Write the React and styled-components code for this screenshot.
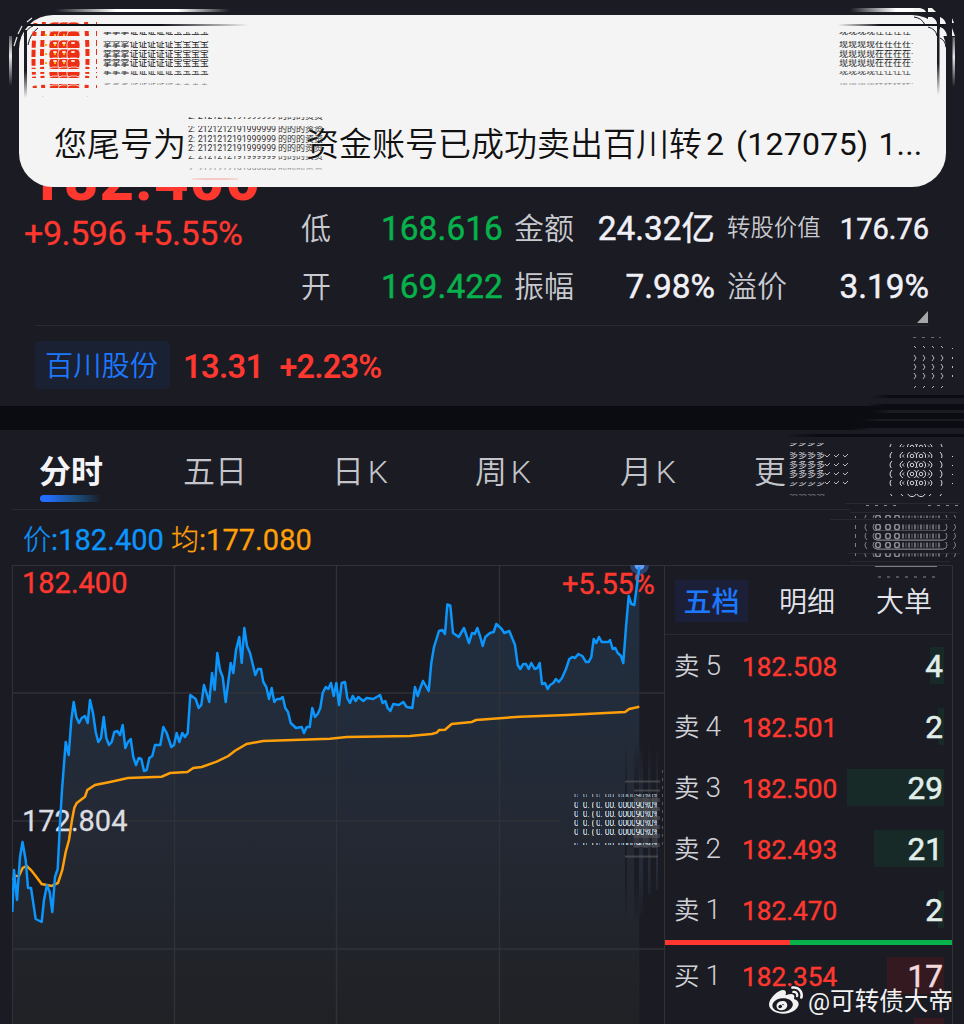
import React from "react";
import styled, { createGlobalStyle, css } from "styled-components";
import { FaWeibo } from "react-icons/fa";

const Global = createGlobalStyle`
  * { box-sizing: border-box; }
  body {
    margin: 0;
    background: #1a1b23;
    font-family: Roboto, "Noto Sans CJK SC", sans-serif;
    line-height: 1;
  }
`;

const red = "#ff382f";
const green = "#07b14b";
const line = "#2a2b30";

const Screen = styled.main`
  position: relative;
  width: 964px;
  height: 1024px;
  overflow: hidden;
  background: #1a1b23;
  color: #ececf2;
`;

/* ---------- quote header ---------- */
const Quote = styled.section`
  height: 406px;
  padding: 158px 35px 0 24px;
`;
const QuoteTop = styled.div`
  display: flex;
  height: 167px;
`;
const PriceColumn = styled.div`
  width: 277px;
`;
const LastPrice = styled.div`
  height: 44px;
  line-height: 44px;
  padding-left: 4px;
  font-size: 60px;
  font-weight: 800;
  letter-spacing: 1.1px;
  color: ${red};
`;
const Change = styled.div`
  margin-top: 13px;
  line-height: 36px;
  font-size: 34px;
  letter-spacing: -0.4px;
  white-space: nowrap;
  -webkit-text-stroke: 0.3px ${red};
  color: ${red};
`;
const Stats = styled.div`
  display: grid;
  grid-template-columns: 75px 127px 11px 70px 131px 12px 100px 102px;
  grid-template-rows: 58px 58px;
  align-items: center;
  padding-top: 42px;
`;
const StatLabel = styled.span`
  grid-column: ${(p) => p.$col};
  margin-top: -1px;
  font-size: ${(p) => (p.$small ? 23.4 : 30)}px;
  font-weight: 350;
  color: #c9cacf;
  white-space: nowrap;
`;
const StatValue = styled.span`
  grid-column: ${(p) => p.$col};
  justify-self: end;
  font-size: ${(p) => (p.$small ? 29 : 33.4)}px;
  font-weight: 400;
  letter-spacing: ${(p) => (p.$green ? 0.1 : 0)}px;
  -webkit-text-stroke: 0.5px currentColor;
  color: ${(p) => (p.$green ? green : "#f0f0f6")};
  white-space: nowrap;
`;
const QuoteRule = styled.div`
  display: flex;
  justify-content: flex-end;
  align-items: flex-end;
  height: 1px;
  margin-left: 11px;
  background: ${line};
`;
const Expand = styled.svg`
  width: 11px;
  height: 12px;
  margin-bottom: 3px;
  margin-right: 1px;
`;
const StockRow = styled.div`
  display: flex;
  align-items: center;
  height: 48px;
  margin: 15px 0 0 11px;
`;
const StockTag = styled.span`
  width: 135px;
  height: 48px;
  line-height: 52px;
  border-radius: 4px;
  background: #1a2132;
  color: #1c78ff;
  text-align: center;
  font-size: 28.2px;
  font-weight: 350;
  text-indent: -2px;
`;
const StockFigure = styled.span`
  margin-left: ${(p) => p.$gap}px;
  padding-top: 5px;
  font-size: 32.5px;
  font-weight: 600;
  letter-spacing: ${(p) => p.$ls}px;
  color: ${red};
`;

const Divider = styled.div`
  height: 24px;
  background: #0b0c11;
`;

/* ---------- period tabs ---------- */
const Tabs = styled.nav`
  display: flex;
  height: 80px;
  padding: 0 0 0 39px;
  margin-bottom: -1px;
`;
const Tab = styled.span`
  position: relative;
  width: ${(p) => p.$w}px;
  line-height: 84px;
  font-size: 32px;
  font-weight: ${(p) => (p.$on ? 600 : 350)};
  color: ${(p) => (p.$on ? "#f4f4f8" : "#c4c5ca")};
  word-spacing: -4px;
  white-space: nowrap;
  ${(p) =>
    p.$on &&
    css`
      &::after {
        content: "";
        position: absolute;
        left: 1px;
        top: 65px;
        width: 62px;
        height: 7px;
        border-radius: 4px;
        background: linear-gradient(90deg, #226dff 12%, #1b5287 55%, #1a1b23);
      }
    `}
`;
const TabRule = styled.div`
  width: 838px;
  height: 1px;
  margin-left: 12px;
  background: ${line};
`;
const Readout = styled.div`
  display: flex;
  gap: 7px;
  height: 55px;
  padding-left: 23px;
  line-height: 60px;
  font-size: 29px;
`;
const Reading = styled.span`
  color: ${(p) => p.$c};
  letter-spacing: 0.05px;
  -webkit-text-stroke: 0.3px currentColor;
  span {
    font-size: 28px;
    font-weight: 300;
  }
`;

/* ---------- chart + order book ---------- */
const Body = styled.div`
  display: flex;
  height: 459px;
  padding-left: 12px;
`;
const Chart = styled.div`
  position: relative;
  width: 652px;
`;
const Plot = styled.svg`
  display: block;
  width: 652px;
  height: 459px;
`;
const AxisLabel = styled.span`
  position: absolute;
  left: ${(p) => p.$x}px;
  top: ${(p) => p.$y}px;
  font-size: 29px;
  -webkit-text-stroke: 0.4px currentColor;
  color: ${(p) => p.$c};
`;
const Book = styled.aside`
  width: 289px;
  height: 480px;
  border: 1px solid #303136;
`;
const BookTabs = styled.div`
  display: flex;
  align-items: center;
  height: 69px;
  padding: 2px 0 0 10px;
  border-bottom: 1px solid ${line};
`;
const BookTab = styled.span`
  width: ${(p) => p.$w}px;
  height: 42px;
  line-height: 45px;
  margin-right: ${(p) => p.$gap || 0}px;
  text-align: center;
  font-size: 28px;
  font-weight: ${(p) => (p.$on ? 500 : 350)};
  color: ${(p) => (p.$on ? "#1c78ff" : "#e4e4ea")};
  background: ${(p) => (p.$on ? "#1b1f38" : "transparent")};
`;
const Level = styled.div`
  display: flex;
  align-items: center;
  height: 61px;
  padding: 0 8px 0 9px;
`;
const Side = styled.span`
  width: 68px;
  padding-top: 1px;
  font-size: 28px;
  font-weight: 350;
  color: #d0d1d6;
  white-space: nowrap;
  span {
    font-size: 25.5px;
    margin-right: 6px;
  }
`;
const LevelPrice = styled.span`
  width: 104px;
  padding-top: 3px;
  font-size: 26.2px;
  -webkit-text-stroke: 0.4px currentColor;
  color: ${red};
`;
const Volume = styled.span`
  display: flex;
  justify-content: flex-end;
  align-items: center;
  flex: 1;
  height: 37px;
  padding: 2px 1px 0 0;
  font-size: 31.5px;
  font-weight: 400;
  -webkit-text-stroke: 0.6px currentColor;
  color: ${(p) => (p.$buy ? "#f3d9dc" : "#e0eee9")};
  background: linear-gradient(${(p) => (p.$buy ? "#341a20, #341a20" : "#182a27, #182a27")}) right / ${(p) => p.$fill}px 100% no-repeat;
`;
const Ratio = styled.div`
  display: flex;
  height: 5px;
  background: ${green};
  &::before {
    content: "";
    width: 125px;
    background: ${red};
  }
`;

/* ---------- notification ---------- */
const Notice = styled.div`
  position: absolute;
  left: 19px;
  top: 15px;
  width: 927px;
  height: 172px;
  border-radius: 34px;
  background: #f4f4f4;
  color: #111;
`;
const Message = styled.p`
  display: flex;
  align-items: center;
  margin: 108px 0 0 35px;
  height: 42px;
  font-size: 33px;
  font-weight: 350;
  white-space: nowrap;
`;
const Masked = styled.span`
  width: 120px;
`;
const Latin = styled.span`
  margin-left: ${(p) => p.$gap}px;
  font-size: 32px;
  letter-spacing: ${(p) => p.$ls || 0}px;
  font-weight: 400;
`;

/* ---------- repeated-tile blocks ---------- */
const TileBlock = styled.div`
  position: absolute;
  left: ${(p) => p.$x}px;
  top: ${(p) => p.$y}px;
  color: ${(p) => p.$c};
`;
const TileRow = styled.div`
  display: flex;
  height: ${(p) => p.$h}px;
  margin-bottom: ${(p) => p.$gap}px;
  align-items: ${(p) => p.$align || "center"};
  overflow: hidden;
  opacity: ${(p) => p.$fade || 1};
`;
const Tile = styled.span`
  flex: none;
  width: ${(p) => p.$w}px;
  height: ${(p) => p.$s}px;
  line-height: ${(p) => p.$s}px;
  font-size: ${(p) => p.$s}px;
  font-weight: 400;
  overflow: hidden;
`;
const Overlay = styled.svg`
  position: absolute;
  left: 0;
  top: 0;
  pointer-events: none;
`;

const Tiles = ({ x, y, c, rows, text, w = 9, s = 9 }) => (
  <TileBlock $x={x} $y={y} $c={c} aria-hidden="true">
    {rows.map(([h, gap, align, fade], i) => (
      <TileRow key={i} $h={h} $gap={gap} $align={align} $fade={fade}>
        {[...text].map((ch, j) => (
          <Tile key={j} $w={w} $s={s}>
            {ch}
          </Tile>
        ))}
      </TileRow>
    ))}
  </TileBlock>
);

const Watermark = styled.div`
  position: absolute;
  left: 769px;
  top: 985px;
  display: flex;
  align-items: center;
  height: 32px;
  gap: 5px;
  color: #f2f2f2;
  font-size: 24.6px;
  white-space: nowrap;
  span {
    padding-top: 3px;
  }
`;

const price =
  "12.3,912 14,870 17,900 20,857 22.5,842 25.7,860 28,888 31,888 35.7,919 41.7,922 44,900 47,885 49.7,892 52.3,912 55,877 57.7,869 60,823 62,790 65.7,742 68.7,755 71.3,720 73.7,702 76.3,717 79,723 81.7,718 85,716 87.7,723 90,700 93,713 95.7,732 98.3,742 101,738 103.7,717 106.3,738 109,745 111.7,742 114.3,732 117.3,731 120,735 122.7,725 125.3,748 128,742 130.7,739 133.3,757 136,765 138.7,758 141.3,759 144,771 146.7,770 149.3,758 152.3,756 155,745 160.3,745 163.3,727 166.7,733 171.3,747 174,745 176.7,733 179.3,742 182.3,733 185,737 187.7,733 190.3,695 195.7,699 198.7,708 201.3,705 204,685 209.3,702 212,673 214.7,690 217.3,653 220,670 222.7,677 225.7,702 230.7,663 233.3,673 236,650 239.3,637 241.7,663 244.3,628 247,646 250,653 255.3,675 258,669 261,669 263.3,682 266.3,687 269,699 271.7,688 274.3,702 277,699 280.3,699 282.7,697 285.3,708 288,712 290.7,723 296,728 301.7,727 304,733 306.7,727 309.7,727 312.3,708 315,717 317.7,714 320.3,708 322.7,693 325.7,687 328.3,689 331,683 333.7,696 336.3,683 339,705 341.7,683 345,682 347.3,698 350,703 352.7,696 355.7,701 358.3,697 363.3,701 366.7,698 373.3,699 380,695 382.7,703 385.3,701 387.7,708 390.3,711 393.3,704 398.7,705 403.3,702 406.7,707 412.3,708 415,687 417.7,696 420.3,688 423,681 428.7,691 431.3,663 434,647 439,631 442.3,630 445,634 447.3,604.5 450.3,605.5 453,633 458.7,637 464,628 469,643 472,633 474.7,634 477.3,628 480,636 482.7,646 485.3,637 490,633 493.7,632 496.3,624 501.7,629 504.3,633 509.3,631 515,645 517.7,665 520.3,669 523.3,664 526,664 528.7,669 531.3,663 534.7,669 537.3,668 539.7,663 542,684 545,683 547.7,689 550,685 553.3,683 556,679 558.7,682 562,678 566,669 569.3,659 572.3,657 575,658 578.3,654 582.3,656 586,662 588.7,662 591.3,657 593.7,639 596.3,643 599,637 601.7,642 608.3,642 610,640 612.7,649 615.3,648 617.7,653 621,656 623.3,663 626,627 628.7,596 631.3,604 634.3,605 636.7,587 639.3,567";
const average =
  "13,880 15,876 19,875.7 22.7,868 26.7,866 31,870 35.7,876 41.7,884 51.7,886 58,883 62.3,870 65.7,852 69,840 72,820 74.3,808 76.7,803 85,796.7 87.3,790 95,785 110,782 128,778 161.7,776.7 170,773 187.3,772 193.3,768 201.7,767 216.7,761.7 228.3,756 235,750.7 246.7,744 263,741 330,738.7 346.7,737 410,736 431.7,734 436.7,732.7 439.3,730 445,729.7 451.7,724 471.7,722 476,720 520,716.7 566.7,715 625,712 629.3,709 639.3,706.7";

const asks = [
  ["5", "182.508", 4, 14],
  ["4", "182.501", 2, 6],
  ["3", "182.500", 29, 97],
  ["2", "182.493", 21, 70],
  ["1", "182.470", 2, 6],
];

const textRows = [
  [4, 5, "flex-end"],
  [7, 2, "center"],
  [8, 1, "center"],
  [8, 4, "center"],
  [5, 7, "flex-end", 0.9],
  [2, 0, "center", 0.5],
];

const TradeChart = () => (
  <Chart>
    <Plot viewBox="12 565 652 459">
      <defs>
        <linearGradient id="area" x1="0" y1="565" x2="0" y2="1024" gradientUnits="userSpaceOnUse">
          <stop offset="0" stopColor="#1f2f42" />
          <stop offset="0.5" stopColor="#242a36" />
          <stop offset="1" stopColor="#202125" />
        </linearGradient>
        <linearGradient id="streak" x1="0" y1="740" x2="0" y2="925" gradientUnits="userSpaceOnUse">
          <stop offset="0" stopColor="#1a1b23" stopOpacity="0" />
          <stop offset="0.3" stopColor="#1a1b23" />
          <stop offset="0.75" stopColor="#1a1b23" />
          <stop offset="1" stopColor="#1a1b23" stopOpacity="0" />
        </linearGradient>
        <linearGradient id="glow" x1="0" y1="740" x2="0" y2="925" gradientUnits="userSpaceOnUse">
          <stop offset="0" stopColor="#252b38" stopOpacity="0" />
          <stop offset="0.3" stopColor="#252b38" />
          <stop offset="0.7" stopColor="#252b38" />
          <stop offset="1" stopColor="#252b38" stopOpacity="0" />
        </linearGradient>
      </defs>
      <polygon points={`12,1024 ${price} 639.3,1024`} fill="url(#area)" />
      <g stroke="#303237" fill="none">
        <path d="M12 565.5H664M12.5 565V1024" />
        <path d="M12 693H664M12 821H560M12 949H664M174.5 565V1024M336.5 565V1024M499.5 565V1024" strokeWidth="1.4" />
      </g>
      <g fill="url(#streak)">
        <rect x="625" y="740" width="2" height="185" />
        <rect x="634" y="740" width="5" height="180" />
      </g>
      <g fill="url(#glow)">
        <rect x="639" y="745" width="4" height="170" />
        <rect x="648" y="745" width="2.500" height="150" />
        <rect x="656" y="750" width="2" height="140" />
      </g>
      <g stroke="#55565b">
        <path d="M625 781.5H660M634 790.5H660M625 856.500H658" strokeWidth="2" opacity="0.7" />
        <path d="M636.500 794V848M645.500 794V848M654.500 794V848" strokeWidth="5.500" opacity="0.5" />
        <path d="M634 800H660M634 809H660M634 818H660M634 827H660M634 836H660M634 845H660" strokeWidth="4" opacity="0.55" />
        <path d="M662.5 770V850" strokeDasharray="3 5" />
      </g>
      <text x="22" y="831" fontSize="29" fill="#dcdde1" stroke="#dcdde1" strokeWidth="0.3">172.804</text>
      <polyline points={average} fill="none" stroke="#ff9f0a" strokeWidth="2.5" />
      <text x="562" y="594" fontSize="29" letterSpacing="-0.3" fill={red} stroke={red} strokeWidth="0.4">+5.55%</text>
      <circle cx="639.5" cy="565" r="9.5" fill="#2a4370" />
      <circle cx="639.5" cy="565" r="5" fill="#6a9cf0" />
      <polyline points={price} fill="none" stroke="#0c95fb" strokeWidth="2.5" strokeLinejoin="round" />
    </Plot>
    <AxisLabel $x={10} $y={4} $c={red}>182.400</AxisLabel>
  </Chart>
);

const Edges = () => (
  <Overlay width="964" height="200" viewBox="0 0 964 200">
    <defs>
      <linearGradient id="wl"><stop offset="0" stopColor="#fff" stopOpacity="0" /><stop offset="0.35" stopColor="#fff" /><stop offset="0.7" stopColor="#fff" /><stop offset="1" stopColor="#fff" stopOpacity="0" /></linearGradient>
      <linearGradient id="dl"><stop offset="0.6" stopColor="#111218" /><stop offset="1" stopColor="#111218" stopOpacity="0" /></linearGradient>
      <linearGradient id="dr"><stop offset="0" stopColor="#111218" stopOpacity="0" /><stop offset="0.4" stopColor="#111218" /></linearGradient>
      <linearGradient id="wr"><stop offset="0" stopColor="#fff" stopOpacity="0" /><stop offset="0.7" stopColor="#fff" /></linearGradient>
      <linearGradient id="dv" x1="0" x2="0" y1="0" y2="1"><stop offset="0.6" stopColor="#1a1b23" /><stop offset="1" stopColor="#1a1b23" stopOpacity="0" /></linearGradient>
      <linearGradient id="wv" x1="0" x2="0" y1="0" y2="1"><stop offset="0" stopColor="#fff" stopOpacity="0.3" /><stop offset="0.4" stopColor="#fff" stopOpacity="0.9" /><stop offset="1" stopColor="#fff" stopOpacity="0" /></linearGradient>
      <clipPath id="bands">
        {[[22, 2], [31, 5], [40, 8], [49, 9], [59, 10], [72, 6], [84, 4], [96, 1]].map(([y, h]) => (
          <rect key={y} x="28" y={y} width="72" height={h} />
        ))}
      </clipPath>
    </defs>
    <rect x="55" y="9" width="175" height="3" fill="url(#wl)" />
    <rect x="27" y="24" width="222" height="2" fill="url(#dl)" />
    <rect x="9" y="36" width="3" height="50" fill="url(#wv)" />
    <rect x="24" y="30" width="3" height="68" fill="url(#dv)" />
    <path d="M24 36q3-8 9-10M28 45q2-11 10-17M20 30q3-6 8-9" fill="none" stroke="#1a1b23" strokeWidth="1" />
    <path d="M18 34l4-8M14 46l3-9M27 22l5-4" stroke="#e8e8e8" strokeWidth="1.2" />
    <rect x="850" y="8" width="66" height="4" fill="url(#wr)" />
    <rect x="838" y="24" width="106" height="2" fill="url(#dr)" />
    <rect x="937" y="15" width="2.5" height="80" fill="url(#dv)" />
    <rect x="946" y="15" width="6" height="60" fill="#1a1b23" />
    <path d="M914 8h6q5 1 6 4h-12zM928 8h4l4 4h-8zM928 17h4q5 3 5 7h-9zM940 17q5 2 6 7h-6zM940 27q6 2 7 9h-7zM952 18l2 5h-2zM952 28l3 8h-3z" fill="#f4f4f4" />
    <rect x="952.5" y="37" width="2.5" height="50" fill="url(#wv)" />
    <path d="M914 17q8 1 11 8M928 27q8 2 9 9M940 38q5 2 6 9" fill="none" stroke="#1a1b23" strokeWidth="1" />
    <g clipPath="url(#bands)">
      <path d="M35.500 23q-4 34 0 72M44 22q-4 36 0 74" fill="none" stroke="#ed2f16" strokeDasharray="7 2" strokeWidth="4" />
      <path d="M86 22q3 36 0 74" fill="none" stroke="#ed2f16" strokeDasharray="7 2" strokeWidth="4" />
      <path d="M96.5 22V90" stroke="#ed2f16" strokeDasharray="6 3" strokeWidth="1" />
      {[22, 31, 40, 49, 58, 67, 76, 85].map((y) =>
        [49, 58, 67].map((x) => <rect key={`${x}-${y}`} x={x} y={y} width="13" height="11" rx="4" fill="#ed2f16" stroke="#f4f4f4" strokeWidth="0.8" />)
      )}
      <g fill="#fce9df">
        {[43, 52, 61, 70].map((y) =>
          [55, 64, 73].map((x) => <ellipse key={`${x}-${y}`} cx={x} cy={y} rx="2.2" ry="1.1" />)
        )}
      </g>
      <g fill="#ffb000">
        {[34, 44, 53, 62].map((y) => [45, 54, 63].map((x) => <rect key={`${x}-${y}`} x={x} y={y} width="2" height="2" />))}
      </g>
    </g>
    <ellipse cx="215" cy="179" rx="24" ry="1" fill="#f5b7b2" opacity="0.7" />
  </Overlay>
);

const ringRows = [[444, 3], [452, 6], [461, 7], [470, 8], [480, 6], [494, 3]];
const pillRows = [[515, 3], [524, 7], [533, 8], [542, 8], [553, 4], [566, 2]];

const Marks = () => (
  <Overlay width="964" height="1024" viewBox="0 0 964 1024">
    <defs>
      <clipPath id="rings">{ringRows.map(([y, h]) => <rect key={y} x="880" y={y} width="80" height={h} />)}</clipPath>
      <clipPath id="pills">{pillRows.map(([y, h]) => <rect key={y} x="850" y={y} width="110" height={h} />)}</clipPath>
      <linearGradient id="fadeIn"><stop offset="0" stopColor="#0b0c11" stopOpacity="0" /><stop offset="0.2" stopColor="#0b0c11" /></linearGradient>
      <linearGradient id="liteIn"><stop offset="0" stopColor="#1a1b23" stopOpacity="0" /><stop offset="0.2" stopColor="#1a1b23" /></linearGradient>
    </defs>
    <rect x="872" y="395" width="92" height="3" fill="url(#fadeIn)" />
    <rect x="866" y="404" width="98" height="3" fill="url(#fadeIn)" />
    <rect x="872" y="410" width="92" height="3" fill="url(#liteIn)" />
    <rect x="860" y="419" width="104" height="2" fill="url(#liteIn)" />
    <rect x="850" y="428" width="114" height="3" fill="url(#liteIn)" />
    <rect x="785" y="434" width="179" height="3" fill="url(#fadeIn)" />

    <g fill="none" stroke="#b7b8bd" strokeWidth="1">
      <path d="M913 337.5h3m6 0h3m6 0h3m5 0h2" opacity="0.5" />
      {[914, 923, 932, 941].map((x) => (
        <g key={x}>
          <path d={`M${x} 346l2 2`} />
          {[358, 367, 376].map((y) => <path key={y} d={`M${x} ${y - 3}l2 3l-2 3`} />)}
          <path d={`M${x + 2} 386l-2 2`} />
        </g>
      ))}
      <path d="M952.5 348v1M952.5 357v2M952.5 366v2M952.5 375v2" />
      {[825, 834, 843].map((x) => [455, 464, 473, 482].map((y) => <path key={`${x}${y}`} d={`M${x} ${y}l2 2l3-3`} />))}
    </g>

    <g clipPath="url(#rings)" fill="none" stroke="#d6d7db">
      {[447, 456, 465, 474, 483, 492].map((y) => (
        <g key={y}>
          {[911, 920].map((x) => <circle key={x} cx={x + 1} cy={y} r="4.6" />)}
          {[911, 920].map((x) => <circle key={x} cx={x + 1} cy={y} r="1.8" />)}
          <path d={`M903 ${y - 4}q-6 4 0 8M904 ${y - 1.5}q-3 1.5 0 3M929 ${y - 4}q6 4 0 8M928 ${y - 1.5}q3 1.5 0 3`} />
          <path d={`M892 ${y - 4}q-4 4 0 8M940 ${y - 4}q4 4 0 8M952.5 ${y}v1`} />
        </g>
      ))}
    </g>
    <g clipPath="url(#pills)" fill="none" stroke="#8b8c91" strokeWidth="0.9">
      {[518, 527, 536, 545, 554].map((y) => (
        <g key={y}>
          <rect x="873" y={y - 4} width="74" height="8" rx="4" />
          <path d={`M867 ${y - 4}q-4 4 0 8M953 ${y - 4}q5 4 0 8M855.5 ${y - 2}v4`} />
          {[878, 888, 897].map((x) => <ellipse key={x} cx={x} cy={y} rx="2.4" ry="2.8" strokeWidth="1.6" />)}
          <path d={`M902 ${y}H941`} strokeDasharray="2 1.500 1 1.500" strokeWidth="5" opacity="0.7" />
        </g>
      ))}
      <path d="M875 566.5h62" />
    </g>
    <g stroke="#3a3a3c" fill="none">
      <path d="M845 503.5h115M850 512.5h108M830 519.5h120M848 553.5h112M850 561.5h100" opacity="0.45" />
      <path d="M878 577h62M866 505.5h30M928 505.5h30" stroke="#8b8c91" strokeDasharray="3 6" />
    </g>
  </Overlay>
);

export default function App() {
  return (
    <Screen>
      <Global />
      <Quote>
        <QuoteTop>
          <PriceColumn>
            <LastPrice>182.400</LastPrice>
            <Change>+9.596 +5.55%</Change>
          </PriceColumn>
          <Stats>
            <StatLabel $col={1}>低</StatLabel>
            <StatValue $col={2} $green>168.616</StatValue>
            <StatLabel $col={4}>金额</StatLabel>
            <StatValue $col={5}>24.32亿</StatValue>
            <StatLabel $col={7} $small>转股价值</StatLabel>
            <StatValue $col={8} $small>176.76</StatValue>
            <StatLabel $col={1}>开</StatLabel>
            <StatValue $col={2} $green>169.422</StatValue>
            <StatLabel $col={4}>振幅</StatLabel>
            <StatValue $col={5}>7.98%</StatValue>
            <StatLabel $col={7}>溢价</StatLabel>
            <StatValue $col={8}>3.19%</StatValue>
          </Stats>
        </QuoteTop>
        <QuoteRule>
          <Expand viewBox="0 0 11 12"><path d="M11 0V12H0z" fill="#a7a7aa" /></Expand>
        </QuoteRule>
        <StockRow>
          <StockTag>百川股份</StockTag>
          <StockFigure $gap={13} $ls={-0.6}>13.31</StockFigure>
          <StockFigure $gap={16} $ls={-0.8}>+2.23%</StockFigure>
        </StockRow>
      </Quote>
      <Divider />
      <Tabs>
        <Tab $w={144} $on>分时</Tab>
        <Tab $w={149}>五日</Tab>
        <Tab $w={143}>日 K</Tab>
        <Tab $w={145}>周 K</Tab>
        <Tab $w={134}>月 K</Tab>
        <Tab $w={60}>更</Tab>
      </Tabs>
      <TabRule />
      <Readout>
        <Reading $c="#0c95fb"><span>价</span>:182.400</Reading>
        <Reading $c="#ff9f0a"><span>均</span>:177.080</Reading>
      </Readout>
      <Body>
        <TradeChart />
        <Book>
          <BookTabs>
            <BookTab $w={73} $gap={23} $on>五档</BookTab>
            <BookTab $w={72} $gap={24}>明细</BookTab>
            <BookTab $w={74}>大单</BookTab>
          </BookTabs>
          {asks.map(([n, p, v, fill]) => (
            <Level key={n}>
              <Side><span>卖</span>{n}</Side>
              <LevelPrice>{p}</LevelPrice>
              <Volume $fill={fill}>{v}</Volume>
            </Level>
          ))}
          <Ratio />
          <Level>
            <Side><span>买</span>1</Side>
            <LevelPrice>182.354</LevelPrice>
            <Volume $buy $fill={57}>17</Volume>
          </Level>
          <Level>
            <Side><span>买</span>2</Side>
            <LevelPrice />
            <Volume $buy $fill={30} />
          </Level>
        </Book>
      </Body>

      <Notice>
        <Message>
          您尾号为<Masked />资金账号已成功卖出百川转
          <Latin $gap={4}>2</Latin>
          <Latin $gap={12} $ls={0.3}>(127075)</Latin>
          <Latin $gap={10} $ls={0.2}>1...</Latin>
        </Message>
      </Notice>
      <Edges />
      <Tiles x={103} y={32} c="#151515" w={8.8} text="掌掌掌证证证证证宝宝宝宝" rows={textRows} />
      <Tiles x={839} y={32} c="#151515" text="现现现现在在在在·" rows={textRows} />
      <Tiles x={183} y={117} c="#333" w={4.9} text=" 2:2121212191999999" rows={textRows} />
      <Tiles x={278} y={117} c="#333" w={9} text="的的的资资" rows={textRows} />
      <Marks />
      <Tiles x={789} y={443} c="#c9cacf" text="多多多多" rows={textRows} />
      <Tiles x={574} y={794} c="#f4f4f6" w={4.4} s={9} text="0 0.(0.00.000090%0%" rows={[[3, 5, "center", 0.7], [6, 3], [7, 2], [7, 2], [7, 7], [2, 0, "center"]]} />
      <Watermark>
        <FaWeibo size={34} />
        <span>@可转债大帝</span>
      </Watermark>
    </Screen>
  );
}
